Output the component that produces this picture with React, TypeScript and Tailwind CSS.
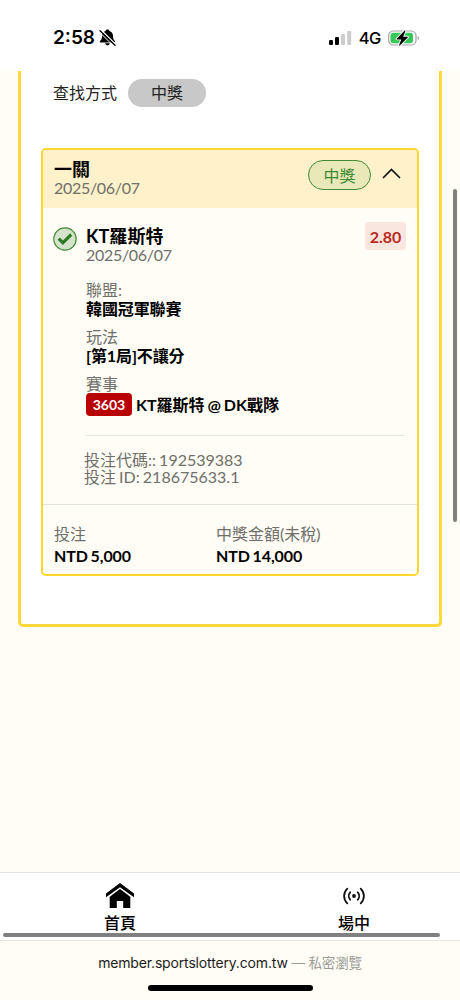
import type { ReactNode } from "react";

const ticket = {
  title: "一關",
  date: "2025/06/07",
  status: "中獎",
  pick: "KT羅斯特",
  odds: "2.80",
  eventNo: "3603",
  match: "KT羅斯特 @ DK戰隊",
  stake: "NTD 5,000",
  payout: "NTD 14,000",
};

function SilentIcon() {
  return (
    <svg width="17" height="17" viewBox="0 0 17 17" className="mt-px ml-[4px]">
      <path
        d="M8.500.6c-1 0-1.700.5-1.900 1.300C4.300 2.600 3 4.400 3 6.800c0 3-.6 4-1.900 5.100-.6.6-.3 1.500.5 1.500h13.800c.8 0 1.100-.9.5-1.500-1.300-1.100-1.900-2.100-1.900-5.100 0-2.400-1.300-4.200-3.600-4.900C10.200 1.100 9.500.6 8.500.6ZM6.200 14.200c.2 1.300 1.100 2.100 2.300 2.100s2.100-.8 2.300-2.100Z"
        fill="#000"
      />
      <path d="M2 1.100 16.600 15.400" stroke="#fff" strokeWidth="1.500" />
      <path d="M1 1.700 16 16.200" stroke="#000" strokeWidth="1.300" strokeLinecap="round" />
      <path d="M.4 3.100 14.600 17" stroke="#fff" strokeWidth="1" />
    </svg>
  );
}

function SignalIcon() {
  return (
    <svg width="23" height="15" viewBox="0 0 23 15">
      <rect x="0" y="9" width="4" height="5" rx="1.200" fill="#000" />
      <rect x="6" y="6" width="4" height="8" rx="1.200" fill="#000" />
      <rect x="12" y="3" width="4" height="11" rx="1.200" fill="#ccc" />
      <rect x="18.200" y="0" width="4" height="14" rx="1.200" fill="#ccc" />
    </svg>
  );
}

function BatteryIcon() {
  return (
    <svg width="32" height="18" viewBox="0 0 32 18">
      <rect x=".7" y="2" width="27.300" height="14" rx="4.600" fill="none" stroke="#a3a3a3" strokeWidth="1.200" />
      <path d="M29.600 7v4c.9-.4 1.400-1.100 1.400-2s-.5-1.600-1.400-2Z" fill="#a3a3a3" />
      <rect x="2.500" y="3.800" width="22.500" height="10.400" rx="2.900" fill="#34c759" />
      <path
        d="m16.700 1.600-8 8.100c-.3.300-.1.700.3.700h4.300l-2.200 5.700c-.2.600.3.900.7.500l8-8.200c.300-.3.100-.7-.3-.7h-4.300l2.200-5.600c.2-.6-.3-.9-.7-.5Z"
        fill="#000"
        stroke="#fff"
        strokeWidth="1.800"
        paintOrder="stroke"
      />
    </svg>
  );
}

function WonIcon() {
  return (
    <svg width="24" height="24" viewBox="0 0 24 24" className="mt-[5px] mr-[9px] shrink-0">
      <circle cx="12" cy="12" r="11.200" fill="#d5e2cc" stroke="#3f8a34" strokeWidth="1.200" />
      <path d="m5.700 11.600 4.200 4.200 8.300-8.300" fill="none" stroke="#2c7a22" strokeWidth="3.200" />
    </svg>
  );
}

function HomeIcon() {
  return (
    <svg width="28" height="26" viewBox="0 0 28 26">
      <path d="M14 0 0 10.600v3.700L14 4.200l14 10.100v-3.700Z" fill="#000" />
      <path d="M14 6.100 3.700 13.700V25h7.100v-7h6.400v7h7.100V13.700Z" fill="#000" />
    </svg>
  );
}

function LiveIcon() {
  return (
    <svg width="22" height="18" viewBox="0 0 22 18" fill="none" stroke="#111" strokeWidth="1.800" strokeLinecap="round">
      <circle cx="11" cy="9" r="1.900" fill="#111" stroke="none" />
      <path d="M7.200 5.300a5.600 5.600 0 0 0 0 7.400M14.800 5.300a5.600 5.600 0 0 1 0 7.400" />
      <path d="M4.300 1.600a10.200 10.200 0 0 0 0 14.800M17.700 1.600a10.200 10.200 0 0 1 0 14.800" />
    </svg>
  );
}

function Detail({ label, children }: { label: string; children: ReactNode }) {
  return (
    <div className="mb-[9px]">
      <p className="text-[#6f6f6b]">{label}</p>
      <p className="font-bold tracking-[-0.1px] text-black">{children}</p>
    </div>
  );
}

function StatusBar() {
  return (
    <header className="flex h-[71px] shrink-0 items-start bg-white pt-[27px] font-['Inter',sans-serif]">
      <span className="ml-[53px] text-[19px] leading-[22px] font-semibold text-black">2:58</span>
      <div className="pt-[1px]">
        <SilentIcon />
      </div>
      <div className="ml-auto flex h-[22px] items-center pr-[40px]">
        <SignalIcon />
        <span className="mr-[7px] ml-[7px] text-[16.500px] font-medium tracking-[-0.4px] text-black">4G</span>
        <BatteryIcon />
      </div>
    </header>
  );
}

function TicketCard() {
  return (
    <article className="mx-[20px] mt-[41px] h-[428px] overflow-hidden rounded-[5px] border-[2.5px] border-[#ffd52e] bg-[#fffdf5] text-base leading-[19px]">
      <div className="flex h-[58px] justify-between bg-[#fff1c9] pt-[10px] pr-[16px] pl-[11px]">
        <div>
          <h2 className="text-lg leading-[18px] font-bold text-black">{ticket.title}</h2>
          <p className="tracking-[-0.3px] text-[#6f6f6b]">{ticket.date}</p>
        </div>
        <div className="flex h-[30px] items-center gap-[11px]">
          <span className="flex h-[30px] w-[63px] items-center justify-center rounded-full border border-[#3f8a34] bg-[#e9e8b8] text-[#3f8a34]">
            {ticket.status}
          </span>
          <svg width="19" height="11" viewBox="0 0 19 11" fill="none" stroke="#111" strokeWidth="1.700" className="-mt-[3px]">
            <path d="m1 10 8.500-8.500L18 10" />
          </svg>
        </div>
      </div>

      <div className="flex h-[297px] border-b border-[#e6e3dd] pt-[14px] pr-[13px] pl-[10px]">
        <WonIcon />
        <div className="flex-1">
          <div className="flex h-[58px] justify-between">
            <div className="pt-[5px]">
              <h3 className="text-lg leading-[18px] font-bold tracking-[0.1px] text-black">{ticket.pick}</h3>
              <p className="tracking-[-0.3px] text-[#6f6f6b]">{ticket.date}</p>
            </div>
            <span className="-mr-[2px] flex h-[28px] w-[41px] items-center justify-center rounded-[4px] bg-[#f8e6df] font-bold text-[#bb2a20]">
              {ticket.odds}
            </span>
          </div>
          <Detail label="聯盟:">韓國冠軍聯賽</Detail>
          <Detail label="玩法">[第1局]不讓分</Detail>
          <div>
            <p className="text-[#6f6f6b]">賽事</p>
            <p className="flex h-[23px] items-center font-bold [word-spacing:-1px] text-black">
              <span className="mr-[4px] flex h-[23px] w-[46px] items-center justify-center rounded-[4px] bg-[#b80000] text-sm text-white">
                {ticket.eventNo}
              </span>
              {ticket.match}
            </p>
          </div>
          <div className="mt-[19px] border-t border-[#e6e3dd] pt-[15px] leading-[17px] [word-spacing:-1px] text-[#6f6f6b]">
            <p className="-ml-[2px]">投注代碼:: 192539383</p>
            <p className="-ml-[2px]">投注 ID: 218675633.1</p>
          </div>
        </div>
      </div>

      <div className="grid grid-cols-[162px_1fr] pt-[18px] pl-[11px] leading-[22px]">
        <div>
          <p className="text-[#6f6f6b]">投注</p>
          <p className="font-bold tracking-[-0.1px] [word-spacing:-1px] text-black">{ticket.stake}</p>
        </div>
        <div>
          <p className="text-[#6f6f6b]">中獎金額(未稅)</p>
          <p className="font-bold tracking-[-0.1px] [word-spacing:-1px] text-black">{ticket.payout}</p>
        </div>
      </div>
    </article>
  );
}

export default function App() {
  return (
    <div className="relative flex h-[1000px] w-[460px] flex-col overflow-hidden bg-[#fffdf5] font-['Lato','Noto_Sans_CJK_TC',sans-serif]">
      <StatusBar />

      <main className="flex-1">
        <section className="mx-[18px] h-[556px] rounded-b-[5px] border-[3px] border-t-0 border-[#ffd83a] bg-white pt-[8px]">
          <div className="flex h-[28px] items-center pl-[32px] text-base text-[#222]">
            <span>查找方式</span>
            <span className="ml-[11px] flex h-[28px] w-[78px] items-center justify-center rounded-full bg-[#c8c8c8]">
              中獎
            </span>
          </div>
          <TicketCard />
        </section>
      </main>

      <nav className="flex h-[68px] shrink-0 border-t border-[#e5e5e5] bg-white text-base leading-[20px] font-medium text-black">
        <div className="flex w-[240px] shrink-0 flex-col items-center pt-[10px]">
          <HomeIcon />
          <span className="mt-[4px]">首頁</span>
        </div>
        <div className="flex w-[228px] shrink-0 flex-col items-center pt-[14px]">
          <LiveIcon />
          <span className="mt-[8px]">場中</span>
        </div>
      </nav>

      <footer className="flex h-[60px] shrink-0 flex-col items-center border-t border-[#e8e6e0] font-['Inter','Noto_Sans_CJK_TC',sans-serif]">
        <p className="mt-[12px] text-sm leading-[20px] tracking-[-0.16px] text-[#1c1c1c]">
          member.sportslottery.com.tw <span className="text-[13.5px] text-[#9a9a96]">— 私密瀏覽</span>
        </p>
        <div className="mt-[12px] h-[6px] w-[165px] rounded-full bg-black" />
      </footer>

      {/* scroll indicators */}
      <div className="absolute top-[189px] left-[453px] h-[333px] w-[4px] rounded-full bg-[#80807c]" />
      <div className="absolute top-[933px] left-[3px] h-[4px] w-[437px] rounded-full bg-[#808080]" />
    </div>
  );
}
